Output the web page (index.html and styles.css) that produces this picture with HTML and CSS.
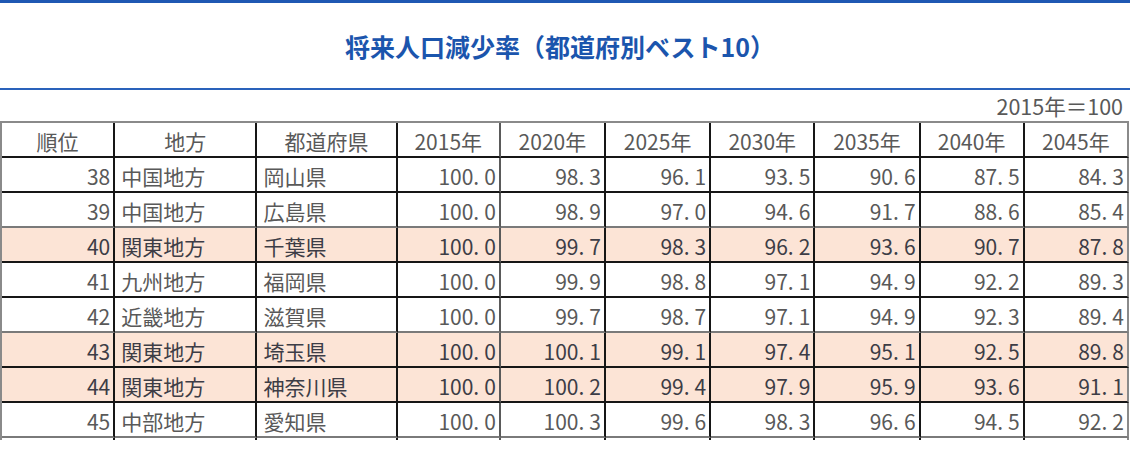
FILE: index.html
```html
<!DOCTYPE html>
<html lang="ja">
<head>
<meta charset="utf-8">
<link rel="stylesheet" href="styles.css">
</head>
<body>
<div class="topbar"></div>
<h1 class="title">将来人口減少率（都道府別ベスト10）</h1>
<div class="rule"></div>
<div class="unit">2015年＝100</div>
<div class="tablewrap">
<table class="grid">
<thead>
<tr class="dark">
<th class="c1">順位</th><th class="c2">地方</th><th class="c3">都道府県</th><th class="c4 lr">2015年</th><th class="c5">2020年</th><th class="c6">2025年</th><th class="c7">2030年</th><th class="c8">2035年</th><th class="c9">2040年</th><th class="c10">2045年</th>
</tr>
</thead>
<tbody>
<tr class="dark"><td class="num">38</td><td class="txt">中国地方</td><td class="txt">岡山県</td><td class="num lr">100<span class="pt">.</span>0</td><td class="num">98<span class="pt">.</span>3</td><td class="num">96<span class="pt">.</span>1</td><td class="num">93<span class="pt">.</span>5</td><td class="num">90<span class="pt">.</span>6</td><td class="num">87<span class="pt">.</span>5</td><td class="num">84<span class="pt">.</span>3</td></tr>
<tr class="light"><td class="num">39</td><td class="txt">中国地方</td><td class="txt">広島県</td><td class="num lr">100<span class="pt">.</span>0</td><td class="num">98<span class="pt">.</span>9</td><td class="num">97<span class="pt">.</span>0</td><td class="num">94<span class="pt">.</span>6</td><td class="num">91<span class="pt">.</span>7</td><td class="num">88<span class="pt">.</span>6</td><td class="num">85<span class="pt">.</span>4</td></tr>
<tr class="dark hl"><td class="num">40</td><td class="txt">関東地方</td><td class="txt">千葉県</td><td class="num lr">100<span class="pt">.</span>0</td><td class="num">99<span class="pt">.</span>7</td><td class="num">98<span class="pt">.</span>3</td><td class="num">96<span class="pt">.</span>2</td><td class="num">93<span class="pt">.</span>6</td><td class="num">90<span class="pt">.</span>7</td><td class="num">87<span class="pt">.</span>8</td></tr>
<tr class="dark"><td class="num">41</td><td class="txt">九州地方</td><td class="txt">福岡県</td><td class="num lr">100<span class="pt">.</span>0</td><td class="num">99<span class="pt">.</span>9</td><td class="num">98<span class="pt">.</span>8</td><td class="num">97<span class="pt">.</span>1</td><td class="num">94<span class="pt">.</span>9</td><td class="num">92<span class="pt">.</span>2</td><td class="num">89<span class="pt">.</span>3</td></tr>
<tr class="light"><td class="num">42</td><td class="txt">近畿地方</td><td class="txt">滋賀県</td><td class="num lr">100<span class="pt">.</span>0</td><td class="num">99<span class="pt">.</span>7</td><td class="num">98<span class="pt">.</span>7</td><td class="num">97<span class="pt">.</span>1</td><td class="num">94<span class="pt">.</span>9</td><td class="num">92<span class="pt">.</span>3</td><td class="num">89<span class="pt">.</span>4</td></tr>
<tr class="dark hl"><td class="num">43</td><td class="txt">関東地方</td><td class="txt">埼玉県</td><td class="num lr">100<span class="pt">.</span>0</td><td class="num">100<span class="pt">.</span>1</td><td class="num">99<span class="pt">.</span>1</td><td class="num">97<span class="pt">.</span>4</td><td class="num">95<span class="pt">.</span>1</td><td class="num">92<span class="pt">.</span>5</td><td class="num">89<span class="pt">.</span>8</td></tr>
<tr class="dark hl"><td class="num">44</td><td class="txt">関東地方</td><td class="txt">神奈川県</td><td class="num lr">100<span class="pt">.</span>0</td><td class="num">100<span class="pt">.</span>2</td><td class="num">99<span class="pt">.</span>4</td><td class="num">97<span class="pt">.</span>9</td><td class="num">95<span class="pt">.</span>9</td><td class="num">93<span class="pt">.</span>6</td><td class="num">91<span class="pt">.</span>1</td></tr>
<tr class="light"><td class="num">45</td><td class="txt">中部地方</td><td class="txt">愛知県</td><td class="num lr">100<span class="pt">.</span>0</td><td class="num">100<span class="pt">.</span>3</td><td class="num">99<span class="pt">.</span>6</td><td class="num">98<span class="pt">.</span>3</td><td class="num">96<span class="pt">.</span>6</td><td class="num">94<span class="pt">.</span>5</td><td class="num">92<span class="pt">.</span>2</td></tr>
<tr class="stub"><td></td><td></td><td></td><td class="lr"></td><td></td><td></td><td></td><td></td><td></td><td></td></tr>
</tbody>
</table>
</div>
</body>
</html>
```

FILE: styles.css
```css
html, body {
  margin: 0;
  padding: 0;
  background: #ffffff;
}

body {
  width: 1130px;
  height: 449px;
  overflow: hidden;
  font-family: "Noto Sans CJK JP", "Noto Sans", sans-serif;
}

.topbar {
  height: 3px;
  background: #1f58b3;
}

.title {
  margin: 0;
  height: 85px;
  display: flex;
  align-items: center;
  justify-content: center;
  padding-right: 10px;
  box-sizing: border-box;
  font-size: 25px;
  font-weight: 700;
  color: #1b55ad;
  letter-spacing: 0;
}

.rule {
  height: 2px;
  background: #2a62bb;
}

.unit {
  height: 31px;
  display: flex;
  align-items: center;
  justify-content: flex-end;
  padding-right: 7px;
  font-size: 21.5px;
  color: #595959;
  line-height: 1;
}

.tablewrap {
  height: 319px;
  overflow: hidden;
}

.grid {
  border-collapse: separate;
  border-spacing: 0;
  table-layout: fixed;
  width: 1129px;
  border-top: 2px solid #8a8a8a;
  border-left: 2px solid #8a8a8a;
  color: #595959;
  font-size: 21px;
}

.grid th,
.grid td {
  box-sizing: border-box;
  height: 35px;
  padding: 0 3px 2px 3px;
  border-right: 2px solid #161616;
  border-bottom: 2px solid #161616;
  vertical-align: bottom;
  line-height: 26px;
  white-space: nowrap;
  overflow: hidden;
}

.grid th {
  font-weight: 400;
  text-align: center;
}

.grid .c1 { width: 113px; }
.grid .c2 { width: 142px; }
.grid .c3 { width: 140px; }
.grid .c4 { width: 103px; }
.grid .c5 { width: 105px; }
.grid .c6 { width: 105px; }
.grid .c7 { width: 104px; }
.grid .c8 { width: 105px; }
.grid .c9 { width: 104px; }
.grid .c10 { width: 104px; }

.grid th:last-child,
.grid td:last-child {
  border-right-color: #8a8a8a;
}

.grid .lr {
  border-right-color: #5a5a5a;
}

.grid tr.light td {
  border-bottom-color: #7a7a7a;
}

.grid .num {
  text-align: right;
}

.grid .txt {
  text-align: left;
  padding-left: 6px;
}

.grid .pt {
  margin-right: 5px;
}

.grid tr.hl td {
  background: #fce4d6;
  color: #3d3d46;
}

.grid tr.stub td {
  border-bottom: none;
}
```
